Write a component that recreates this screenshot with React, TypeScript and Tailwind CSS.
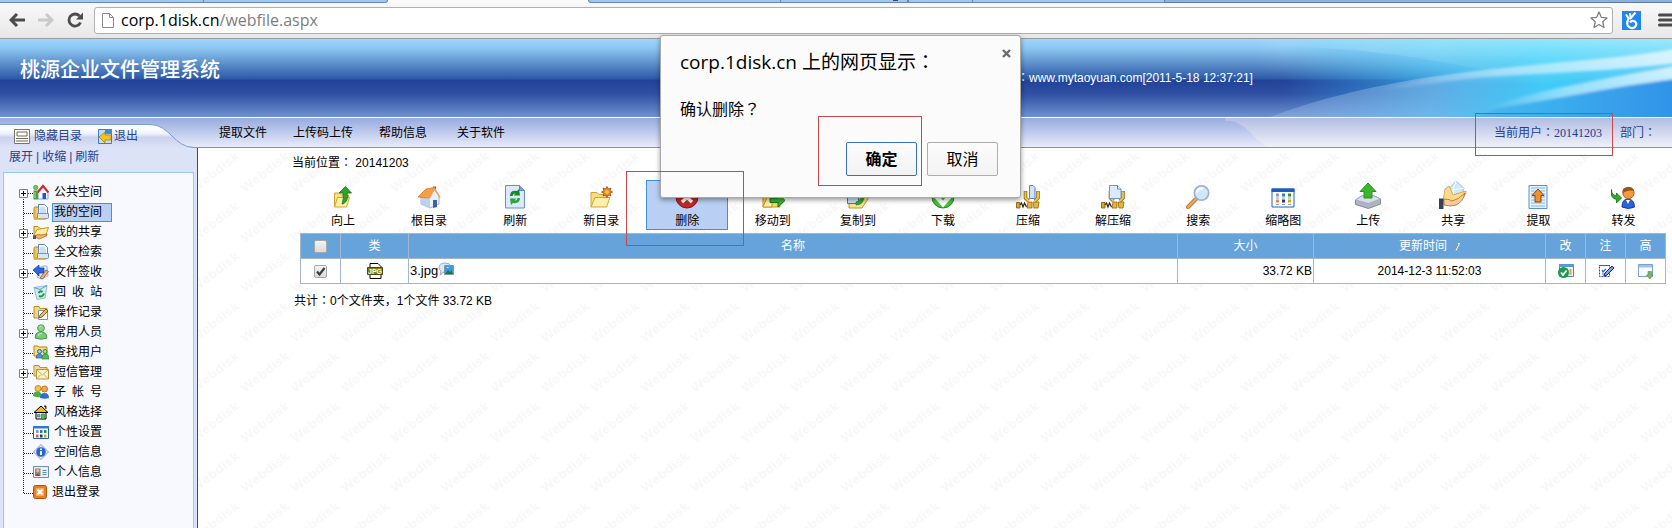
import React from "react";

type P = { children: React.ReactNode };

const I16 = ({ children }: P) => (
  <svg width="16" height="16" viewBox="0 0 16 16" className="shrink-0" aria-hidden="true">{children}</svg>
);
const I24 = ({ children }: P) => (
  <svg width="24" height="24" viewBox="0 0 24 24" className="shrink-0" aria-hidden="true">{children}</svg>
);

/* Full-width punctuation centred in its cell. */
const Mid = ({ children }: P) => <span className="font-['Noto_Sans_CJK_TC',sans-serif] leading-none">{children}</span>;

/* ---------- tree icons ---------- */

const PublicIcon = () => (
  <I16>
    <path d="M5 8 10 3l5 5v7H5z" fill="#f4f8ff" stroke="#8fa2cc" />
    <path d="M4.500 8.500 10 2l5.500 6.500" fill="none" stroke="#d0282e" strokeWidth="2.200" />
    <path d="M9.500 9H13v6H9.500z" fill="#1d58c8" />
    <path d="M.5 6.500h4.500v9H.5z" fill="#3fa63a" />
    <circle cx="2.700" cy="3.500" r="2.200" fill="#6fca5c" stroke="#3b8f35" strokeWidth=".6" />
    <path d="M2 8v6" stroke="#a4e39a" />
  </I16>
);
const PapersIcon = () => (
  <I16>
    <path d="M1 4q0-1 1-1h3l2 2v9H2q-1 0-1-1z" fill="#f1cd62" stroke="#b98a21" />
    <path d="M5.500.5h6l3 3V12h-9z" fill="#f8fbff" stroke="#5b87c4" />
    <path d="M7 4h5M7 6h6M7 8h6" stroke="#9cc0ea" />
    <path d="M4.500 9.500h11v4q0 1-1 1h-10z" fill="#d6e5f8" stroke="#7393c2" />
    <path d="M1.500 5v10H13" fill="none" stroke="#dca92e" strokeWidth="1.500" />
  </I16>
);
const ShareFolderIcon = () => (
  <I16>
    <path d="M1 12V2.500h4l2 2h7V7" fill="#f6dd7c" stroke="#b58a1c" />
    <path d="M1 11 4 5.500l11.500-2L12.500 12z" fill="#ffefa4" stroke="#c79c2c" />
    <path d="M1 12.500q4-3 7-1.500l6-1q1 2-3 3l-5 2z" fill="#f0b56a" stroke="#a9671d" strokeWidth=".8" />
    <path d="M0 11.500h3V15H0z" fill="#555" />
  </I16>
);
const SignIcon = () => (
  <I16>
    <path d="M6 4 10 2h4l1 10-7 3-4-2z" fill="#dfe9f9" stroke="#8ea5cd" strokeWidth=".8" />
    <path d="M0 6 6 1v3h5v5H6v3z" fill="#2f66dd" stroke="#153e9b" strokeWidth=".7" />
    <path d="m7 14 6-8 2.500 1.500L9.500 15z" fill="#f3b06a" stroke="#6b4a2c" strokeWidth=".7" />
  </I16>
);
const RecycleIcon = () => (
  <I16>
    <path d="m1 3.500 13-2-2 12.500-8 1.500z" fill="#cfeaf2" stroke="#8fc0d6" />
    <path d="m1 3.500 6 2L14 1.500" fill="none" stroke="#5d9cc0" />
    <path d="M5.500 9q2-3 4-1M11 9.500q-1.500 4-5 2.500" fill="none" stroke="#1fa02e" strokeWidth="2" />
  </I16>
);
const LogIcon = () => (
  <I16>
    <path d="M1 14V2.500h5l1 2h7V14z" fill="#f4d777" stroke="#b58d25" />
    <path d="M5.500 6.500h9v9h-9z" fill="#fff" stroke="#7c8fb6" />
    <path d="m6 14 1-3 6-6 2 2-6 6z" fill="#f6b64e" stroke="#6b4a1c" strokeWidth=".8" />
  </I16>
);
const PersonIcon = () => (
  <I16>
    <path d="M2 14q0-5 4-6h4q4 1 4 6-6 2.500-12 0z" fill="#7cc877" stroke="#4b9a4c" />
    <circle cx="8" cy="4.200" r="3.400" fill="#8fd487" stroke="#4b9a4c" />
    <path d="M5 12q1-3 4-3M6 3.500q1-1.500 2.500-1.500" fill="none" stroke="#d2f4cd" />
  </I16>
);
const FindUserIcon = () => (
  <I16>
    <path d="M1 12V2h4l1 1h8v9z" fill="#f6dd7c" stroke="#b58a1c" />
    <circle cx="6.500" cy="7.500" r="2" fill="#9fc9f6" stroke="#285fa8" />
    <circle cx="12" cy="7.500" r="2" fill="#9de29a" stroke="#2c8a3a" />
    <path d="M3 14q0-4 3.500-4T9 14z" fill="#4f93e2" stroke="#285fa8" strokeWidth=".7" />
    <path d="M9 15q0-5 3.500-5T16 15z" fill="#58b95c" stroke="#2c8a3a" strokeWidth=".7" />
  </I16>
);
const MailIcon = () => (
  <I16>
    <path d="M1 12V1.500h5l1 2h7v8.500z" fill="#f4d98a" stroke="#b8923a" />
    <path d="M3.500 5.500h12v9.500h-12z" fill="#fdf3c8" stroke="#b8923a" />
    <path d="m4 6 5.500 5L15 6M4 14.500l4-4M15 14.500l-4-4" fill="none" stroke="#d0ab58" />
  </I16>
);
const SubAccountIcon = () => (
  <I16>
    <circle cx="5" cy="4.500" r="3" fill="#f2c34a" stroke="#a77a14" strokeWidth=".8" />
    <circle cx="11.500" cy="5" r="3" fill="#f4a84c" stroke="#a8620f" strokeWidth=".8" />
    <path d="M0 12q0-5 5-4.500Q9 8 9 13q-5 1-9-1z" fill="#4cae43" />
    <path d="M7 14q0-5 4.500-5t4.500 5q-4 1.500-9 0z" fill="#2b6fd6" />
  </I16>
);
const StyleIcon = () => (
  <I16>
    <path d="M3 8h10v7H3z" fill="#fff6d8" stroke="#000" />
    <path d="M1 8.500 8 2l7 6.500z" fill="#f6b81c" stroke="#000" />
    <path d="M11 2h2v3" fill="#d33" stroke="#000" strokeWidth=".8" />
    <path d="M4.500 10.500h2.500v2.500H4.500z" fill="#64b8f0" stroke="#358" strokeWidth=".6" />
    <path d="M8.500 10h3v5h-3z" fill="#5dc14d" stroke="#263" strokeWidth=".6" />
  </I16>
);
const GridIcon = () => (
  <I16>
    <path d="M.5 2.500h15v12H.5z" fill="#fff" stroke="#1f5fae" />
    <path d="M0 2h16v2.500H0z" fill="#2f78d4" />
    <path d="M3 6h2.500v3H3z" fill="#8a94c8" /><path d="M7 6h2.500v3H7z" fill="#2b6fd0" /><path d="M11 6h2.500v3H11z" fill="#2c9636" />
    <path d="M3 10.500h2.500v3H3z" fill="#e0603a" /><path d="M7 10.500h2.500v3H7z" fill="#163c90" /><path d="M11 10.500h2.500v3H11z" fill="#d6a024" />
  </I16>
);
const InfoIcon = () => (
  <I16>
    <path d="M8 .5 15.500 8 8 15.500.5 8z" fill="#dfe7f5" stroke="#8e9dbb" />
    <circle cx="8" cy="8" r="4.800" fill="#2a63d4" />
    <path d="M8 4.500v1.500M8 7v4" stroke="#fff" strokeWidth="1.800" />
  </I16>
);
const CardIcon = () => (
  <I16>
    <path d="M.5 2.500h15v11H.5z" fill="#eaf3fd" stroke="#6f8db5" />
    <path d="M2 4.500h5.500v7.500H2z" fill="#8f8178" />
    <circle cx="4.700" cy="6.800" r="1.700" fill="#f0b890" /><path d="M2.500 12q2-4 4.500 0z" fill="#b4302a" />
    <path d="M9.500 6.500h4M9.500 8.500h4M9.500 10.500h4" stroke="#5f8dca" />
  </I16>
);
const ExitIcon = () => (
  <svg width="14" height="16" viewBox="0 0 14 16" className="shrink-0" aria-hidden="true">
    <rect x=".5" y="1.500" width="13" height="13" rx="2" fill="#e8801f" stroke="#b1520c" />
    <rect x="3" y="4" width="8" height="8" fill="#f3a65a" />
    <path d="m4.500 5.500 5 5M9.500 5.500l-5 5" stroke="#fff" strokeWidth="2" />
  </svg>
);

/* ---------- toolbar icons ---------- */

const UpIcon = () => (
  <I24>
    <path d="M3.500 21.500V8h5l2 2h7v3" fill="#fbe48c" stroke="#d0a432" />
    <path d="m3.500 22 3-9.500h12l-3 9.500z" fill="#fff2a8" stroke="#d0a432" />
    <path d="M12 19q6-3 4-11h4.500l-6-6.500L8 8h4q1 6-1 11z" fill="#2fa32a" stroke="#14701a" strokeWidth=".8" />
  </I24>
);
const HomeIcon = () => (
  <I24>
    <path d="M16 1.500h3v5h-3z" fill="#b5352c" />
    <path d="M4 11v8l9 4 9-4v-9l-5-6z" fill="#eaf1fb" stroke="#9db3d6" />
    <path d="m4 11 9 3v9l-9-4z" fill="#bdd0ec" />
    <path d="m1 12 8-8 8.500-1.500L12 13z" fill="#f7a040" stroke="#d9761c" strokeWidth=".8" />
    <path d="m12 13.500 5.500-10 5.500 9" fill="none" stroke="#eda56c" strokeWidth="1.600" />
    <path d="M16 15h4v7l-4 1z" fill="#3f5f9e" />
  </I24>
);
const RefreshIcon = () => (
  <I24>
    <path d="M2.500.5h14l5 5v17.500h-19z" fill="#dce9fb" stroke="#6b8dcc" />
    <path d="M16.500.5v5h5" fill="#7f9fd8" stroke="#5f82c4" />
    <path d="M7 11q0-6 7-5l2-2 1 6.500h-6.500l2-2q-2.500-.5-3 2.500z" fill="#128a24" />
    <path d="M17 13q0 6-7 5l-2 2-1-6.500h6.500l-2 2q2.500.5 3-2.500z" fill="#2aa53a" />
  </I24>
);
const NewFolderIcon = () => (
  <I24>
    <path d="M2 22V7.500h6l2 2h7V13" fill="#f8dd80" stroke="#cda33a" />
    <path d="m2 22 4-9.500h15L17.500 22z" fill="#ffefa8" stroke="#cda33a" />
    <path d="m18 1.500 1.200 2.500L22 3l-1 2.700 2.500 1.300-2.500 1.200L22 11l-2.800-1L18 12.500 16.800 10 14 11l1-2.800L12.500 7 15 5.700 14 3l2.800 1z" fill="#f08a24" stroke="#b2420c" strokeWidth=".8" />
    <circle cx="18" cy="7" r="2" fill="#ffc84a" />
  </I24>
);
const DeleteIcon = () => (
  <I24>
    <circle cx="12" cy="12" r="11" fill="#c3272b" stroke="#8a1114" />
    <path d="m7 8 10 9M17 8 7 17" stroke="#fff" strokeWidth="3.500" />
  </I24>
);
const MoveIcon = () => (
  <I24>
    <path d="M2 22V5h7l2 2h8v15z" fill="#f8d764" stroke="#c4951c" />
    <path d="m2 22 5-12h4v12z" fill="#fff0a6" stroke="#c4951c" />
    <path d="M9 13h8V8.500l7 7-7 6.500v-4.500H9z" fill="#3bb22e" stroke="#16751a" />
  </I24>
);
const CopyToIcon = () => (
  <I24>
    <path d="M3 23V6h6l2 2h11v6l-6 9z" fill="#fae28a" stroke="#c4951c" />
    <path d="M1.500 7.500h11v11h-11z" fill="#cfe2fa" stroke="#4571b4" />
    <path d="M10 20q8 0 8-9h4l-5-5-5 5h3q0 5-5 6z" fill="#3aa52d" stroke="#1a741c" strokeWidth=".6" />
  </I24>
);
const DownloadIcon = () => (
  <I24>
    <circle cx="12" cy="12" r="11" fill="#45c334" stroke="#23861b" />
    <path d="m5 11 7 8 7-8" fill="none" stroke="#fff" strokeWidth="4.500" />
  </I24>
);
const Clamp = () => (
  <>
    <path d="M9.500 6v7l3 3M22 6v7l-3 3" fill="none" stroke="#9b6d10" strokeWidth="3.600" />
    <path d="M9.500 6.500V13l3 3M22 6.500V13l-3 3" fill="none" stroke="#f0c65a" strokeWidth="1.800" />
    <path d="M12 17h4v6h-5zM17 17h6l-1 6h-4z" fill="#e7b63a" stroke="#8f6410" strokeWidth=".8" />
    <path d="M.5 17.500h3.500v5.500H.5z" fill="#d9a72c" stroke="#7c560c" strokeWidth=".8" />
    <path d="m4 20 1.500-2 1.500 4 1.500-4L10.500 22" fill="none" stroke="#2d2410" strokeWidth="1.200" />
  </>
);
const ZipIcon = () => (
  <I24><Clamp /><path d="M13.500.5h3.500l2 2v11h-5.500z" fill="#cfe2fa" stroke="#5b83bd" /></I24>
);
const UnzipIcon = () => (
  <I24><Clamp /><path d="M8.500.5h8l3.500 3.500v9.500H8.500z" fill="#dbe9fb" stroke="#7397cb" /><path d="M16.500.5V4H20" fill="#fff" stroke="#5b83bd" /></I24>
);
const SearchIcon = () => (
  <I24>
    <path d="m2 22 8-8" stroke="#b97a3c" strokeWidth="4" strokeLinecap="round" />
    <path d="m2 22 8-8" stroke="#f0a85a" strokeWidth="2" strokeLinecap="round" />
    <circle cx="15.500" cy="8" r="7.200" fill="#cfe7fb" stroke="#9cafca" strokeWidth="1.600" />
    <path d="M11 7.500q1-4.500 6-4" fill="none" stroke="#fff" strokeWidth="2" />
  </I24>
);
const ThumbIcon = () => (
  <I24>
    <path d="M1 4h22v18H1z" fill="#fff" stroke="#1f62b8" />
    <path d="M.5 3.500h23v3.500H.5z" fill="#1d5dc0" />
    <path d="M5 8.500h3v3H5z" fill="#8a94c8" /><path d="M11 8.500h3v3h-3z" fill="#2b7fd0" /><path d="M17 8.500h3v3h-3z" fill="#2c9636" />
    <path d="M5 14.500h3v3H5z" fill="#e8845c" /><path d="M11 14.500h3v3h-3z" fill="#163c90" /><path d="M17 14.500h3v3h-3z" fill="#d6a024" />
    <path d="M5 13h3M11 13h3M17 13h3M5 19.500h3M11 19.500h3M17 19.500h3" stroke="#999" />
  </I24>
);
const UploadIcon = () => (
  <svg width="26" height="26" viewBox="0 0 26 26" className="-mt-[2px] shrink-0" aria-hidden="true">
    <path d="m.5 17 6-4h13l6 3v5l-12 4.500-13-4z" fill="#b0b3c8" stroke="#85899f" />
    <path d="m.5 17 6-4h13l6 3-12 4.500z" fill="#dadce9" stroke="#a0a4ba" strokeWidth=".8" />
    <path d="M13 0 5 8.500h4V15h8V8.500h4z" fill="#3cb62c" stroke="#2a9022" />
    <circle cx="22" cy="20.500" r="1" fill="#5f3" />
  </svg>
);
const ShareIcon = () => (
  <svg width="28" height="28" viewBox="0 0 28 28" className="-mt-[4px] shrink-0" aria-hidden="true">
    <path d="m17 0 8 7-2 8-8 3-6-9z" fill="#cfe8fb" stroke="#8ab8de" strokeWidth=".8" />
    <path d="m17 0-3 9 11-2M14 9l1 9" fill="none" stroke="#fff" />
    <path d="m6 8 4-3 4 9 13-4q1 2-4 8l-8 5-11-3z" fill="#fbdc8c" stroke="#cf9a3c" strokeWidth=".8" />
    <path d="M5 18q6 0 8 2 6-1 13-8-2 9-9 12-6 2-12 0z" fill="#f8cc98" stroke="#b0691f" strokeWidth=".8" />
    <path d="M0 17.500h4.500V28H0z" fill="#3b3f55" />
  </svg>
);
const ExtractIcon = () => (
  <I24>
    <path d="M3 .5h18v23H3z" fill="#e4f2fd" stroke="#5c90c8" />
    <path d="M5 3h14M5 6h14M5 9h14M5 12h14M5 15h14M5 18h14M5 21h14" stroke="#84b8e2" />
    <path d="M12 4 6 10.500h3V17h6v-6.500h3z" fill="#f2902c" stroke="#8a4712" />
  </I24>
);
const ForwardIcon = () => (
  <I24>
    <path d="M.5 4.500q0 6 5 6V8l5 5-5 5v-3.500Q-1.500 13 .5 4.500z" fill="#2fae2a" stroke="#116a14" strokeWidth=".8" />
    <path d="M11 22q0-8 6-8t6.500 8q-6 3-12.500 0z" fill="#2b62d8" stroke="#173c96" />
    <path d="m15 15 2 4 2-4z" fill="#fff" />
    <circle cx="17.500" cy="8" r="5.600" fill="#f39a3c" stroke="#b15c10" />
    <path d="M11.500 8q-1-6 6-6 5 0 5.500 4-5-1-8 .5Z" fill="#9a541c" />
  </I24>
);

type TreeItem = { label: string; icon: React.ComponentType; plus?: boolean; active?: boolean };

const tree: TreeItem[] = [
  { label: "公共空间", icon: PublicIcon, plus: true },
  { label: "我的空间", icon: PapersIcon, active: true },
  { label: "我的共享", icon: ShareFolderIcon, plus: true },
  { label: "全文检索", icon: PapersIcon },
  { label: "文件签收", icon: SignIcon, plus: true },
  { label: "回\u2002收\u2002站", icon: RecycleIcon },
  { label: "操作记录", icon: LogIcon },
  { label: "常用人员", icon: PersonIcon, plus: true },
  { label: "查找用户", icon: FindUserIcon },
  { label: "短信管理", icon: MailIcon, plus: true },
  { label: "子\u2002帐\u2002号", icon: SubAccountIcon },
  { label: "风格选择", icon: StyleIcon },
  { label: "个性设置", icon: GridIcon },
  { label: "空间信息", icon: InfoIcon },
  { label: "个人信息", icon: CardIcon },
  { label: "退出登录", icon: ExitIcon },
];

const tools: { label: string; icon: React.ComponentType; active?: boolean }[] = [
  { label: "向上", icon: UpIcon },
  { label: "根目录", icon: HomeIcon },
  { label: "刷新", icon: RefreshIcon },
  { label: "新目录", icon: NewFolderIcon },
  { label: "删除", icon: DeleteIcon, active: true },
  { label: "移动到", icon: MoveIcon },
  { label: "复制到", icon: CopyToIcon },
  { label: "下载", icon: DownloadIcon },
  { label: "压缩", icon: ZipIcon },
  { label: "解压缩", icon: UnzipIcon },
  { label: "搜索", icon: SearchIcon },
  { label: "缩略图", icon: ThumbIcon },
  { label: "上传", icon: UploadIcon },
  { label: "共享", icon: ShareIcon },
  { label: "提取", icon: ExtractIcon },
  { label: "转发", icon: ForwardIcon },
];

function Check({ label, checked }: { label: string; checked?: boolean }) {
  return (
    <span className="inline-grid align-middle">
      <input
        type="checkbox"
        aria-label={label}
        defaultChecked={checked}
        className="peer col-start-1 row-start-1 size-[13px] appearance-none rounded-[2px] border border-[#a8a8a8] bg-linear-to-b from-[#f2f2f2] to-[#dcdcdc]"
      />
      <svg viewBox="0 0 13 13" className="pointer-events-none invisible col-start-1 row-start-1 size-[13px] peer-checked:visible" aria-hidden="true">
        <path d="m3 6.500 2.500 3L10.500 3" fill="none" stroke="#3c3c3c" strokeWidth="2.200" />
      </svg>
    </span>
  );
}

function Browser() {
  return (
    <div className="border-b border-[#9a9a9a] bg-linear-to-b from-[#fafafa] to-[#e9e8e8]">
      <div className="flex h-[3px]">
        <div className="w-[204px] border-r border-b border-[#6488b8] bg-[#a3c6f0]" />
        <div className="w-[184px] rounded-br-[3px] border-r border-b border-[#6488b8] bg-[#a3c6f0]" />
        <div className="w-[200px] bg-[#fafafa]" />
        <div className="w-[193px] rounded-bl-[3px] border-r border-b border-l border-[#6488b8] bg-[#a3c6f0]" />
        <div className="flex w-[192px] justify-center border-r border-b border-[#6488b8] bg-[#a3c6f0] pl-[50px]">
          <svg width="20" height="2" viewBox="0 0 20 2" aria-hidden="true"><path d="M1 .5h5M16 0v2" stroke="#445" /></svg>
        </div>
        <div className="w-[192px] border-r border-b border-[#6488b8] bg-[#a3c6f0]" />
        <div className="flex-1 border-b border-[#5c7ba8] bg-[#90b0dc]" />
      </div>
      <div className="flex h-[35px] items-center pb-[1px] pl-[9px]">
        <button aria-label="后退" className="mr-[13px]">
          <svg width="16" height="14" viewBox="0 0 16 14"><path d="M8 1 2 7l6 6M2 7h14" fill="none" stroke="#4c4c4c" strokeWidth="3" /></svg>
        </button>
        <button aria-label="前进" className="mr-[13px]">
          <svg width="16" height="14" viewBox="0 0 16 14"><path d="m8 1 6 6-6 6M14 7H0" fill="none" stroke="#cacaca" strokeWidth="3" /></svg>
        </button>
        <button aria-label="重新加载" className="mr-[10px]">
          <svg width="17" height="16" viewBox="0 0 17 16">
            <path d="M13.500 10.500A6 6 0 1 1 12.500 4" fill="none" stroke="#4c4c4c" strokeWidth="2.800" />
            <path d="M16 .5v7H9z" fill="#4c4c4c" />
          </svg>
        </button>
        <div className="flex h-[27px] flex-1 items-center rounded-[3px] border border-[#b0b0b0] bg-white pr-[4px] pl-[7px]">
          <svg width="12" height="15" viewBox="0 0 12 15" aria-hidden="true"><path d="M.5.5h7l4 4v10H.5zM7.500.5v4h4" fill="#fff" stroke="#8c8c8c" /></svg>
          <span className="ml-[7px] flex-1 font-['Open_Sans','Noto_Sans',sans-serif] text-[16px] leading-[24px] text-[#7d7d7d]">
            <span className="text-black">corp.1disk.cn</span>/webfile.aspx
          </span>
          <svg width="18" height="18" viewBox="0 0 18 18" aria-hidden="true">
            <path d="m9 1 2.300 5.300 5.700.6-4.300 3.800 1.300 5.800L9 13.500l-5 3 1.300-5.800L1 6.900l5.700-.6z" fill="#fff" stroke="#7e7e7e" strokeWidth="1.300" strokeLinejoin="round" />
          </svg>
        </div>
        <svg width="19" height="19" viewBox="0 0 19 19" className="ml-[9px]" aria-hidden="true">
          <path d="M0 0h19v19H0z" fill="#1f88ef" />
          <path d="M7 7q-3 5-1 8 3 3.500 7 1 2.500-3 0-5.500-3-1.500-5 1" fill="none" stroke="#fff" strokeWidth="2.200" />
          <path d="M4 3.500 7 8M8 2 8.500 7M13.500 1.500 8 8" fill="none" stroke="#fff" strokeWidth="2" />
        </svg>
        <svg width="14" height="14" viewBox="0 0 14 14" className="ml-[17px]" aria-hidden="true"><path d="M1.500 2H14M1.500 7H14M1.500 12H14" stroke="#4a4a4a" strokeWidth="3" strokeLinecap="round" /></svg>
      </div>
    </div>
  );
}

function Banner() {
  return (
    <header className="relative flex h-[78px] items-center bg-[linear-gradient(to_bottom,#9ad8ff_0%,#8cc6f2_12%,#2d59a6_51%,#22429a_53%,#2f4fa2_70%,#6d92cf_100%)]">
      <svg className="absolute top-0 right-0 h-[78px] w-[422px]" viewBox="0 0 422 78" preserveAspectRatio="none" aria-hidden="true">
        <defs>
          <linearGradient id="cy" x1="0" x2="1"><stop offset=".08" stopColor="#34a8ea" stopOpacity="0" /><stop offset=".5" stopColor="#34b8f0" stopOpacity=".85" /><stop offset=".7" stopColor="#2fcaf8" /><stop offset="1" stopColor="#3fbcf4" /></linearGradient>
          <linearGradient id="tp" x1="0" x2="0" y1="0" y2="1"><stop offset="0" stopColor="#a0ecfd" stopOpacity=".95" /><stop offset="1" stopColor="#a0ecfd" stopOpacity="0" /></linearGradient>
          <linearGradient id="fd" x1="0" x2="1"><stop offset="0" stopColor="#fff" stopOpacity="0" /><stop offset=".45" stopColor="#fff" stopOpacity=".8" /><stop offset="1" stopColor="#fff" /></linearGradient>
          <linearGradient id="ar" x1="0" x2="1"><stop offset="0" stopColor="#fff" stopOpacity="0" /><stop offset=".4" stopColor="#fff" stopOpacity=".14" /><stop offset="1" stopColor="#fff" stopOpacity="0" /></linearGradient>
          <linearGradient id="sw" x1="0" x2="1"><stop offset="0" stopColor="#b8caf0" stopOpacity=".3" /><stop offset=".4" stopColor="#a8c8f2" stopOpacity=".4" /><stop offset=".75" stopColor="#6fd0f8" stopOpacity=".2" /></linearGradient>
          <linearGradient id="bm" x1="0" x2="1"><stop offset="0" stopColor="#dfeaff" stopOpacity=".05" /><stop offset=".4" stopColor="#e8f6ff" stopOpacity=".5" /><stop offset="1" stopColor="#eefcff" stopOpacity=".8" /></linearGradient>
          <linearGradient id="bl" x1="0" x2="1"><stop offset="0" stopColor="#3f98e4" stopOpacity=".2" /><stop offset="1" stopColor="#2f92e8" /></linearGradient>
          <filter id="sf" x="-5%" y="-20%" width="110%" height="140%"><feGaussianBlur stdDeviation="1.600" /></filter>
          <mask id="mk"><path d="M0 0h422v78H0z" fill="url(#fd)" /></mask>
        </defs>
        <path d="M0 0h422v78H0z" fill="url(#cy)" />
        <path d="M0 0h422v46H0z" fill="url(#tp)" mask="url(#mk)" />
        <path d="M0 8C100 6 170 18 240 32L300 0H0z" fill="url(#ar)" />
        <path d="M20 78C80 56 130 46 180 38c80-12 160-12 242-28v68z" fill="url(#sw)" />
        <g filter="url(#sf)">
          <path d="M245 70c55-10 105-22 185-30v45H210z" fill="url(#bl)" />
          <path d="M130 50C220 24 340 26 430 9v15c-90 11-170 10-230 18-30 4-50 8-70 8z" fill="url(#bm)" />
          <path d="M240 68c40-15 100-26 190-42v13c-80 10-130 24-190 29z" fill="url(#bm)" />
        </g>
      </svg>
      <h1 className="relative mb-[16px] ml-[20px] text-[20px] leading-[28px] font-medium text-white">桃源企业文件管理系统</h1>
      <p className="absolute top-[30px] left-[1017px] text-[12px] leading-[18px] text-white"><Mid>：</Mid>www.mytaoyuan.com[2011-5-18 12:37:21]</p>
    </header>
  );
}

function NavBar() {
  return (
    <nav className="relative flex h-[31px] items-center border-t border-b border-t-white border-b-[#6f96c4] bg-linear-to-b from-[#98abdf] to-[#e8ecfb] text-[12px] leading-[16px]">
      <svg className="absolute top-0 right-0 h-[29px] w-[447px]" viewBox="0 0 447 29" preserveAspectRatio="none" aria-hidden="true">
        <defs><linearGradient id="nr" x1="0" x2="0" y1="0" y2="1"><stop offset="0" stopColor="#b2bde2" /><stop offset="1" stopColor="#eff1fa" /></linearGradient></defs>
        <path d="M0 0h447v29H45C32 26 26 12 16 7 10 3 5 3 0 3z" fill="url(#nr)" />
      </svg>
      <div className="relative h-full w-[198px] shrink-0">
        <svg className="absolute top-0 left-0" width="198" height="30" viewBox="0 0 198 30" aria-hidden="true">
          <defs><linearGradient id="tb" x1="0" x2="0" y1="0" y2="1"><stop offset=".2" stopColor="#fbfcff" /><stop offset=".4" stopColor="#eef1fb" /><stop offset=".55" stopColor="#c9d2ef" /><stop offset="1" stopColor="#dde3f7" /></linearGradient></defs>
          <path d="M0 6.500h150c20 0 24 23 44 23h4V30H0z" fill="url(#tb)" />
          <path d="M0 6.500h150c20 0 24 23 44 23h4" fill="none" stroke="#7a9bd0" />
        </svg>
        <div className="relative flex h-full items-center pt-[7px] pl-[14px] text-[#25418f]">
          <svg width="16" height="15" viewBox="0 0 16 15" className="mr-[4px]" aria-hidden="true">
            <path d="M.5.5h15v14H.5z" fill="#fffef4" stroke="#77756a" />
            <path d="M3 3h10v4H3zM2 9.500h12M2 12h12" fill="none" stroke="#6c6a60" />
          </svg>
          <a href="#hide">隐藏目录</a>
          <svg width="14" height="15" viewBox="0 0 14 15" className="mr-[2px] ml-[16px]" aria-hidden="true">
            <path d="M.5.5h13v14H.5z" fill="#bfe0f8" stroke="#3a7ec0" />
            <path d="M7 0h7v5H7z" fill="#3d8bd4" />
            <path d="m1 8 6-5v3h6v5H7v3z" fill="#f8c21c" stroke="#b37c08" strokeWidth=".8" />
          </svg>
          <a href="#logout">退出</a>
        </div>
      </div>
      <div className="relative flex flex-1 items-center gap-[26px] pl-[21px] text-black">
        <a href="#extract">提取文件</a>
        <a href="#code">上传码上传</a>
        <a href="#help">帮助信息</a>
        <a href="#about" className="ml-1">关于软件</a>
      </div>
      <div className="relative flex items-center gap-[18px] pr-[16px] text-[#22408f]">
        <span>当前用户<Mid>：</Mid><span className="font-['Liberation_Serif',serif]">20141203</span></span>
        <span>部门<Mid>：</Mid></span>
      </div>
    </nav>
  );
}

function Sidebar() {
  return (
    <aside className="flex w-[198px] shrink-0 flex-col border-r border-[#2c4c94] bg-[#dde3f7] pr-[3px] pl-[3px]">
      <div className="flex items-center gap-[3px] pt-[1px] pb-[7px] pl-[6px] text-[12px] leading-[16px] text-[#25418f]">
        <a href="#expand">展开</a>|<a href="#collapse">收缩</a>|<a href="#reload">刷新</a>
      </div>
      <div className="flex-1 border border-b-0 border-[#99c8f2] bg-[#f8f9fe] pt-[9px] pl-[15px]">
        <ul className="text-[12px] leading-[18px] text-black">
          {tree.map((t, i) => (
            <li key={t.label} className="flex h-[20px] items-center">
              <svg width="14" height="20" viewBox="0 0 14 20" className="shrink-0" aria-hidden="true">
                <path d={i === 0 ? "M4.500 11V20" : i === tree.length - 1 ? "M4.500 0V11" : "M4.500 0V20"} stroke="#222" strokeDasharray="1 1" />
                <path d="M5 11.500h9" stroke="#222" strokeDasharray="1 1" />
                {t.plus && (
                  <>
                    <path d="M.5 7.500h8v8h-8z" fill="#fff" stroke="#808080" />
                    <path d="M2 11.500h5M4.500 9v5" stroke="#000" />
                  </>
                )}
              </svg>
              <t.icon />
              <a
                href="#node"
                className={
                  t.active
                    ? "ml-[3px] border border-[#3f95dc] bg-[#b9cff3] pr-[9px] pl-[1px] leading-[17px]"
                    : "ml-[3px] border border-transparent pl-[1px] leading-[17px]"
                }
              >
                {t.label}
              </a>
            </li>
          ))}
        </ul>
      </div>
    </aside>
  );
}

function FileTable() {
  const th = "border border-[#a3b6cc] p-0 font-normal";
  const td = "border border-[#a3b6cc] bg-white p-0";
  return (
    <table className="w-full table-fixed border-collapse text-[12px] leading-[16px]">
      <colgroup>
        <col className="w-[40px]" /><col className="w-[68px]" /><col /><col className="w-[136px]" />
        <col className="w-[232px]" /><col className="w-[40px]" /><col className="w-[40px]" /><col className="w-[40px]" />
      </colgroup>
      <thead>
        <tr className="h-[25px] bg-[#66a3da] text-white">
          <th className={th}><Check label="全选" /></th>
          <th className={th}>类</th>
          <th className={th}>名称</th>
          <th className={th}>大小</th>
          <th className={th}>
            更新时间
            <svg width="8" height="8" viewBox="0 0 8 8" className="ml-[5px] inline" aria-hidden="true"><path d="M0 .5h7L3.500 7z" fill="#7c9cba" /><path d="M6 .5h1.500L4 7.500" fill="none" stroke="#fff" /></svg>
          </th>
          <th className={th}>改</th>
          <th className={th}>注</th>
          <th className={th}>高</th>
        </tr>
      </thead>
      <tbody>
        <tr className="h-[25px] text-black">
          <td className={td + " text-center"}><Check label="选择 3.jpg" checked /></td>
          <td className={td}>
            <svg width="16" height="16" viewBox="0 0 16 16" className="mx-auto">
              <path d="M3 .5h8l3 3v12H3z" fill="#fff" stroke="#000" />
              <path d="M.5 4.500h15v7H.5z" fill="#80800c" stroke="#4a4a00" />
              <text x="8" y="10.500" textAnchor="middle" className="fill-white font-['Liberation_Sans',sans-serif] text-[7px] font-bold">JPG</text>
            </svg>
          </td>
          <td className={td + " pl-[1px]"}>
            <div className="flex items-center">
              <a href="#file" className="text-[13px]">3.jpg</a>
              <svg width="17" height="15" viewBox="0 0 17 15" className="mb-1" aria-hidden="true">
                <path d="M1 6q0-5 6-5 5 0 6 3v5q-4 2-7 1l-4 3 1-4Q1 8 1 6z" fill="#d8e9f6" stroke="#8db0cc" />
                <path d="M6.500 3.500h9v9h-9z" fill="#3f97dc" stroke="#7b95ae" />
                <path d="m7 12 3-4 2 2 1.500-1.500L15 12z" fill="#1c7a34" />
                <path d="M8 5h3l-1 1z" fill="#fff" />
              </svg>
            </div>
          </td>
          <td className={td + " pr-[1px] text-right"}>33.72 KB</td>
          <td className={td + " text-center"}>2014-12-3 11:52:03</td>
          <td className={td}>
            <svg width="16" height="16" viewBox="0 0 16 16" className="mx-auto" aria-label="改">
              <path d="M1.500 1.500h14v12h-14z" fill="#f4f4f4" stroke="#4f86c8" />
              <path d="M1 1h15v3H1z" fill="#5b96da" /><path d="M11.500 6h2v6h-2z" fill="#d9a560" />
              <circle cx="5.500" cy="9.500" r="5.500" fill="#1d9a4e" />
              <path d="m3 9.500 2 2.500 3.500-4.500" fill="none" stroke="#fff" strokeWidth="1.800" />
            </svg>
          </td>
          <td className={td}>
            <svg width="16" height="16" viewBox="0 0 16 16" className="mx-auto" aria-label="注">
              <path d="M1.500 2.500h10v11h-10z" fill="#fff" stroke="#2a3fc4" strokeDasharray="2 1" />
              <path d="M1 2.500h11M4 7l1 2 3-3M4 11h3" fill="none" stroke="#2a62d4" strokeWidth="1.200" />
              <path d="m6 13 1-3 7-7 2 2-7 7z" fill="#7fa2ee" stroke="#1b1f8c" />
            </svg>
          </td>
          <td className={td}>
            <svg width="16" height="16" viewBox="0 0 16 16" className="mx-auto" aria-label="高">
              <path d="M.5 1.500h14v12H.5z" fill="#f8fbff" stroke="#7ba0cf" />
              <path d="M1 2h13v2.500H1z" fill="#9cc2ea" />
              <path d="M10 8.500h3.500V12H15l-3.200 4L8.500 12H10z" fill="#7bb568" stroke="#4a8a42" strokeWidth=".6" />
            </svg>
          </td>
        </tr>
      </tbody>
    </table>
  );
}

function Main() {
  return (
    <main className="relative min-w-0 flex-1 bg-white">
      <svg className="absolute inset-0 h-full w-full" aria-hidden="true">
        <defs>
          <pattern id="wm" x="42" y="-2" width="50" height="50" patternUnits="userSpaceOnUse">
            <text x="5" y="47" transform="rotate(-38 5 47)" className="fill-[#f8f8f8] font-['DejaVu_Sans',sans-serif] text-[12px] font-bold">Webdisk</text>
          </pattern>
        </defs>
        <rect width="100%" height="100%" fill="url(#wm)" />
      </svg>
      <div className="relative pr-[6px] pl-[102px] text-[12px]">
        <p className="-ml-[8px] pt-[7px] leading-[16px] text-black">当前位置<Mid>：</Mid> 20141203</p>
        <div className="grid grid-cols-[repeat(5,86fr)_repeat(11,85fr)] pt-[9px] pb-[3px]">
          {tools.map((t) => (
            <div key={t.label} className="min-w-0 px-[2px]">
              <button
                className={
                  t.active
                    ? "flex h-[50px] w-full flex-col items-center border border-[#3f90d4] bg-[#b9cff3] pt-[4px]"
                    : "flex h-[50px] w-full flex-col items-center border border-transparent pt-[4px]"
                }
              >
                <t.icon />
                <span className="mt-[4px] leading-[16px] whitespace-nowrap text-black">{t.label}</span>
              </button>
            </div>
          ))}
        </div>
        <FileTable />
        <p className="-ml-[6px] pt-[9px] leading-[16px] text-black">共计<Mid>：</Mid>0个文件夹，1个文件 33.72 KB</p>
      </div>
    </main>
  );
}

function ConfirmDialog() {
  return (
    <div
      role="dialog"
      aria-label="确认删除"
      className="absolute top-[35px] left-[660px] w-[361px] rounded-[3px] border border-[#a9a9a9] bg-[#fbfbfb] pt-[12px] pr-[22px] pb-[21px] pl-[19px] font-['Open_Sans','Noto_Sans_CJK_SC',sans-serif] text-black shadow-[0_2px_5px_rgba(0,0,0,0.4)]"
    >
      <h2 className="text-[19px] leading-[28px]">corp.1disk.cn 上的网页显示<Mid>：</Mid></h2>
      <button aria-label="关闭" className="absolute top-[13px] right-[9px]">
        <svg width="9" height="9" viewBox="0 0 9 9"><path d="m1 1 7 7M8 1 1 8" stroke="#6c6c6c" strokeWidth="2.400" /></svg>
      </button>
      <p className="mt-[21px] text-[16px] leading-[24px]">确认删除<Mid>？</Mid></p>
      <div className="mt-[21px] flex justify-end gap-[10px] text-[16px] leading-[24px]">
        <button className="h-[34px] w-[71px] rounded-[2px] border border-[#3a6fc0] bg-linear-to-b from-[#fcfcfc] to-[#f3f3f3] font-bold">确定</button>
        <button className="h-[34px] w-[71px] rounded-[2px] border border-[#adadad] bg-linear-to-b from-[#fcfcfc] to-[#f3f3f3]">取消</button>
      </div>
    </div>
  );
}

export default function App() {
  return (
    <div className="relative flex min-h-screen flex-col overflow-hidden font-['Liberation_Sans','Noto_Sans_CJK_SC',sans-serif]">
      <Browser />
      <Banner />
      <NavBar />
      <div className="flex flex-1">
        <Sidebar />
        <Main />
      </div>
      <ConfirmDialog />
      <div className="pointer-events-none absolute top-[171px] left-[626px] h-[75px] w-[118px] border border-[#c8474b]" />
      <div className="pointer-events-none absolute top-[116px] left-[818px] h-[70px] w-[104px] border border-[#c8474b]" />
      <div className="pointer-events-none absolute top-[113px] right-[59px] h-[43px] w-[138px] border border-[#c8474b]" />
    </div>
  );
}
